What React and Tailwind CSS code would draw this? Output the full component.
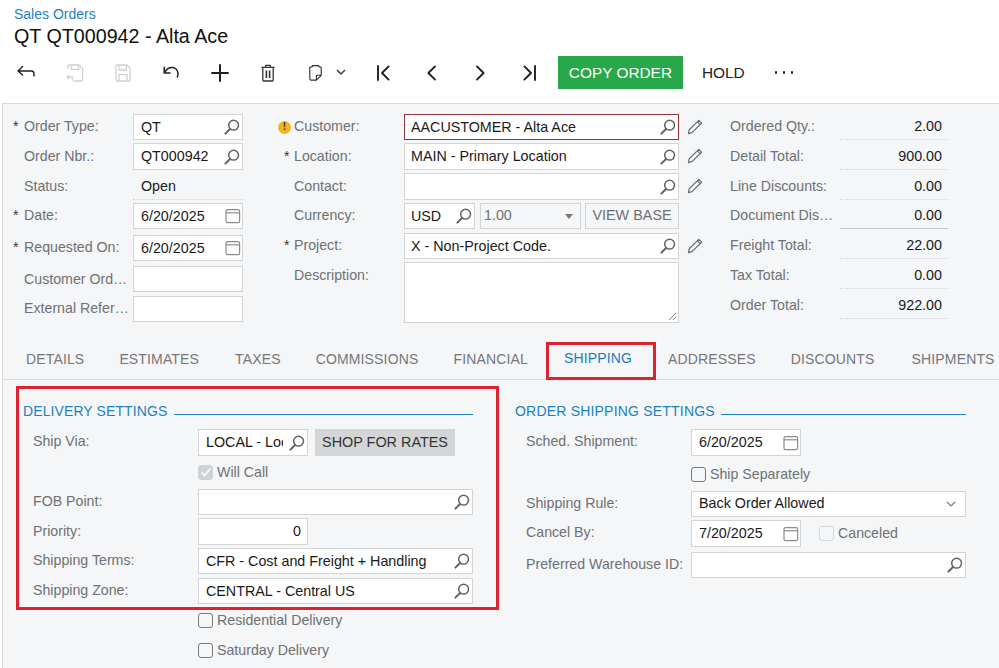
const SearchIcon = () => (
  <svg width="18" height="18" viewBox="0 0 18 18" fill="none" stroke="#5f6368" className="shrink-0">
    <circle cx="10.6" cy="7.2" r="4.9" strokeWidth="1.5" />
    <path d="M7 11 L2.4 15.6" strokeWidth="2" strokeLinecap="round" />
  </svg>
);

const CalendarIcon = () => (
  <svg width="16" height="16" viewBox="0 0 16 16" fill="none" stroke="#8a8d90" strokeWidth="1.2" className="shrink-0">
    <rect x="1" y="1.6" width="13.6" height="13" rx="1.6" />
    <path d="M1 4.8 H14.6" />
  </svg>
);

const PencilIcon = () => (
  <svg width="16" height="16" viewBox="0 0 16 16" fill="none" stroke="#6b6e71" strokeWidth="1.2" strokeLinejoin="round">
    <path d="M1.4 14.6 L2.2 10.8 L11.8 1.4 L14.6 4.2 L5 13.6 Z" />
    <path d="M10.4 2.8 L13.2 5.6" />
  </svg>
);

const Arrow = ({ d, color = "#1f1f1f", sw = 1.6 }) => (
  <svg width="20" height="20" viewBox="0 0 20 20" fill="none" stroke={color} strokeWidth={sw} strokeLinecap="round" strokeLinejoin="round">
    <path d={d} />
  </svg>
);

const toolbarIcons = [
  <Arrow key="back" d="M2 8 L6.6 3.6 M2 8 L6.6 12 M2 8 H15.4 Q18 8 18 10.8 V13" sw={1.4} />,
  <svg key="savecancel" width="20" height="20" viewBox="0 0 20 20" fill="none" stroke="#cfd1d3" strokeWidth="1.3">
    <path d="M3 6 V3 Q3 2 4 2 H14 L17.6 5 V17 Q17.6 18 16.6 18 H9" />
    <path d="M6.4 2 V6.4 H13.6 V2" />
    <path d="M2 14 H7.4 V18 M2 14 L4 12 M2 14 L4 16" />
  </svg>,
  <svg key="save" width="20" height="20" viewBox="0 0 20 20" fill="none" stroke="#cfd1d3" strokeWidth="1.3">
    <path d="M3 3 Q3 2 4 2 H14 L17 5 V17 Q17 18 16 18 H4 Q3 18 3 17 Z" />
    <path d="M6 2 V7 H13.4 V2 M6 18 V11.6 H14 V18" />
  </svg>,
  <Arrow key="undo" d="M3.2 4.2 L3.2 10 L9 10 M3.2 10 C5.6 5.6 9 4 12.2 4.6 C16.4 5.6 18 9.6 16.4 14" sw={1.5} />,
  <Arrow key="plus" d="M10 2 V18 M2 10 H18" sw={2} />,
  <svg key="trash" width="20" height="20" viewBox="0 0 20 20" fill="none" stroke="#333" strokeWidth="1.3" strokeLinejoin="round">
    <path d="M3.4 4.4 H16.6 M7.6 4.4 V2.4 H12.4 V4.4" />
    <path d="M4.8 4.4 V17 Q4.8 18 5.8 18 H14.2 Q15.2 18 15.2 17 V4.4" />
    <path d="M8.4 7.6 V15 M11.6 7.6 V15" strokeWidth="1.6" />
  </svg>,
];

const navIcons = [
  ["first", "M4 3 V17 M14.6 3.4 L8 10 L14.6 16.6"],
  ["prev", "M13 3.4 L6.4 10 L13 16.6"],
  ["next", "M7 3.4 L13.6 10 L7 16.6"],
  ["last", "M5.4 3.4 L12 10 L5.4 16.6 M16 3 V17"],
];

// text field with an optional icon on the right
function Input({ value = "", icon, className = "", textClass = "" }) {
  return (
    <div className={`flex shrink-0 items-center border border-[#d2d4d6] bg-white pl-[7px] pr-[1px] text-[14.3px] text-[#1a1a1a] ${className}`}>
      <span className={`min-w-0 flex-1 overflow-hidden whitespace-nowrap pt-[1px] ${textClass}`}>{value}</span>
      {icon === "search" && <SearchIcon />}
      {icon === "calendar" && <CalendarIcon />}
    </div>
  );
}

function Check({ label, checked, disabled, className = "" }) {
  return (
    <div className={`flex items-center gap-[4px] text-[14.2px] text-[#6f7173] ${className}`}>
      <span className={`flex h-[15px] w-[15px] items-center justify-center rounded-[3px] border ${checked ? "border-[#d0d2d4] bg-[#d0d2d4]" : disabled ? "border-[#d6d8da]" : "border-[#77797b]"}`}>
        {checked && (
          <svg width="12" height="12" viewBox="0 0 12 12" fill="none" stroke="#f4f5f6" strokeWidth="2">
            <path d="M1.6 6.4 L4.6 9.6 L10.4 2.4" />
          </svg>
        )}
      </span>
      <span>{label}</span>
    </div>
  );
}

function Label({ children, className = "" }) {
  return <div className={`truncate text-[14.2px] text-[#6f7173] ${className}`}>{children}</div>;
}

function FieldLabel({ w, children, className = "" }) {
  return (
    <div className={`flex h-[26px] shrink-0 items-center ${w}`}>
      <Label className={className}>{children}</Label>
    </div>
  );
}

const Star = ({ className = "" }) => (
  <span className={`w-[11px] shrink-0 pb-[2px] text-[14px] leading-none text-[#333] ${className}`}>*</span>
);

const WarnIcon = () => (
  <span className="mr-[3px] flex h-[13px] w-[13px] shrink-0 items-center justify-center rounded-full bg-[#f5b417] text-[10px] font-bold leading-none text-[#333]">!</span>
);

const totals = [
  ["Ordered Qty.:", "2.00", "h-[30px]", "border-dotted border-[#d2d4d6]"],
  ["Detail Total:", "900.00", "h-[30px]", "border-dotted border-[#d2d4d6]"],
  ["Line Discounts:", "0.00", "h-[29px]", "border-dotted border-[#d2d4d6]"],
  ["Document Discount:", "0.00", "h-[30px]", "border-solid border-[#c4c6c8]"],
  ["Freight Total:", "22.00", "h-[30px]", "border-dotted border-[#d2d4d6]"],
  ["Tax Total:", "0.00", "h-[30px]", "border-dotted border-[#d2d4d6]"],
  ["Order Total:", "922.00", "h-[30px]", "border-dotted border-[#d2d4d6]"],
];

const tabs = [
  ["DETAILS", ""],
  ["ESTIMATES", "-ml-[1px]"],
  ["TAXES", ""],
  ["COMMISSIONS", "-ml-[1px]"],
  ["FINANCIAL", "-ml-[1px]"],
  ["SHIPPING", ""],
  ["ADDRESSES", ""],
  ["DISCOUNTS", "-ml-[1px]"],
  ["SHIPMENTS", "ml-[1px]"],
];

export default function App() {
  const activeTab = "SHIPPING";

  return (
    <div className="relative h-[668px] w-[999px] overflow-hidden bg-white font-['Liberation_Sans',Arial,sans-serif]">
      {/* Header */}
      <div className="h-[103px] pl-[14px] pt-[6px]">
        <div className="text-[14px] leading-[16px] text-[#1f7fc1]">Sales Orders</div>
        <div className="mt-[2px] text-[19.7px] leading-[24px] text-[#111]">QT QT000942 - Alta Ace</div>
        <div className="-ml-[12px] mt-[8px] flex h-[33px] items-center">
          {toolbarIcons.map((ic, i) => (
            <div key={i} className="flex w-[48.4px] justify-center">{ic}</div>
          ))}
          <div className="flex w-[31px] justify-end">
            <svg width="15" height="18" viewBox="0 0 17 20" fill="none" stroke="#333" strokeWidth="1.3" strokeLinejoin="round">
              <path d="M5 3 H3.4 Q2 3 2 4.4 V16.6 Q2 18 3.4 18 H9.6 L15 12.6 V4.4 Q15 3 13.6 3 H12 M5 3 V1.6 H12 V3 M9.6 18 V12.6 H15" />
            </svg>
          </div>
          <div className="flex w-[23px] justify-end">
            <svg width="10" height="7" viewBox="0 0 10 7" fill="none" stroke="#333" strokeWidth="1.4">
              <path d="M1 1 L5 5 L9 1" />
            </svg>
          </div>
          <div className="w-[13px]" />
          {navIcons.map(([name, d]) => (
            <div key={name} className="flex w-[48.4px] justify-center">
              <Arrow d={d} sw={1.9} />
            </div>
          ))}
          <button className="ml-[5px] flex h-[33px] w-[125px] items-center justify-center bg-[#28a84a] text-[15.4px] text-white">COPY ORDER</button>
          <span className="ml-[19px] text-[15.4px] text-[#222]">HOLD</span>
          <span className="ml-[30px] flex gap-[5.5px]">
            <i className="h-[2.5px] w-[2.5px] rounded-full bg-[#222]" />
            <i className="h-[2.5px] w-[2.5px] rounded-full bg-[#222]" />
            <i className="h-[2.5px] w-[2.5px] rounded-full bg-[#222]" />
          </span>
        </div>
      </div>

      {/* Form area */}
      <div className="ml-[2px] h-[565px] border-l border-t border-[#d6d8da] bg-[#f4f6f8]">
        <div className="flex h-[236px] pt-[10px]">
          {/* Column 1 */}
          <div className="ml-[10px] w-[230px] shrink-0">
            {[
              ["Order Type:", true, "QT", "h-[29px]", "h-[26px]"],
              ["Order Nbr.:", false, "QT000942", "h-[30px]", "h-[27px]"],
            ].map(([l, req, v, rh, ih]) => (
              <div key={l} className={`flex items-start ${rh}`}>
                <div className={`flex w-[120px] shrink-0 items-center ${ih}`}>
                  {req ? <Star /> : <span className="w-[11px]" />}
                  <Label>{l}</Label>
                </div>
                <Input value={v} icon="search" className={`w-[110px] ${ih}`} />
              </div>
            ))}
            <div className="flex h-[30px] items-start">
              <div className="flex h-[27px] w-[120px] shrink-0 items-center">
                <span className="w-[11px]" />
                <Label>Status:</Label>
              </div>
              <div className="flex h-[27px] w-[110px] items-center border-b border-dotted border-[#d2d4d6] pl-[8px] pt-[1px] text-[14.3px] text-[#1a1a1a]">Open</div>
            </div>
            {[
              ["Date:", "6/20/2025", "h-[32px]"],
              ["Requested On:", "6/20/2025", "h-[31px]"],
            ].map(([l, v, rh]) => (
              <div key={l} className={`flex items-start ${rh}`}>
                <div className="flex h-[26px] w-[120px] shrink-0 items-center">
                  <Star />
                  <Label>{l}</Label>
                </div>
                <Input value={v} icon="calendar" className="h-[26px] w-[110px]" />
              </div>
            ))}
            {[
              ["Customer Ord…", "h-[30px]", "pt-[2px]"],
              ["External Refer…", "h-[30px]", ""],
            ].map(([l, rh, lc]) => (
              <div key={l} className={`flex items-start ${rh}`}>
                <div className="flex h-[26px] w-[120px] shrink-0 items-center">
                  <span className="w-[11px]" />
                  <Label className={`w-[108px] ${lc}`}>{l}</Label>
                </div>
                <Input className="h-[26px] w-[110px]" />
              </div>
            ))}
          </div>

          {/* Column 2 */}
          <div className="ml-[35px] w-[452px] shrink-0">
            {[
              ["Customer:", "AACUSTOMER - Alta Ace", "warn", "h-[29px]", "h-[26px]"],
              ["Location:", "MAIN - Primary Location", "star", "h-[30px]", "h-[27px]"],
              ["Contact:", "", "", "h-[30px]", "h-[27px]"],
            ].map(([l, v, mark, rh, ih]) => (
              <div key={l} className={`flex items-start ${rh}`}>
                <div className={`flex w-[126px] shrink-0 items-center ${ih}`}>
                  <span className="flex w-[16px] shrink-0 justify-end">
                    {mark === "warn" && <WarnIcon />}
                    {mark === "star" && <Star className="!w-[10px]" />}
                  </span>
                  <Label>{l}</Label>
                </div>
                <Input value={v} icon="search" className={`w-[275px] !pl-[6px] ${ih} ${mark === "warn" ? "!border-[#94343a]" : ""}`} />
                <div className="ml-[8px] flex h-[26px] items-center"><PencilIcon /></div>
              </div>
            ))}
            <div className="flex h-[30px] items-start">
              <div className="flex h-[26px] w-[126px] shrink-0 items-center">
                <span className="w-[16px]" />
                <Label>Currency:</Label>
              </div>
              <Input value="USD" icon="search" className="h-[26px] w-[71px] !pl-[6px]" />
              <div className="ml-[5px] flex h-[26px] w-[101px] items-center justify-between border border-[#d2d4d6] pl-[3px] pr-[7px] text-[14.3px] text-[#6f7173]">
                <span>1.00</span>
                <span className="h-0 w-0 border-x-[4px] border-t-[5px] border-x-transparent border-t-[#777]" />
              </div>
              <div className="ml-[4px] flex h-[26px] w-[94px] items-center justify-center border border-[#d2d4d6] text-[14.4px] text-[#6f7173]">VIEW BASE</div>
            </div>
            <div className="flex h-[29px] items-start">
              <div className="flex h-[26px] w-[126px] shrink-0 items-center">
                <span className="flex w-[16px] justify-end"><Star className="!w-[10px]" /></span>
                <Label>Project:</Label>
              </div>
              <Input value="X - Non-Project Code." icon="search" className="h-[26px] w-[275px] !pl-[6px]" />
              <div className="ml-[8px] flex h-[26px] items-center"><PencilIcon /></div>
            </div>
            <div className="flex items-start">
              <div className="flex h-[26px] w-[126px] shrink-0 items-center">
                <span className="w-[16px]" />
                <Label className="pt-[2px]">Description:</Label>
              </div>
              <div className="relative h-[61px] w-[275px] border border-[#d2d4d6] bg-white">
                <svg width="9" height="9" viewBox="0 0 9 9" className="absolute bottom-[1px] right-[1px]" stroke="#777" strokeWidth="0.9">
                  <path d="M1 8 L8 1 M5 8 L8 5" />
                </svg>
              </div>
            </div>
          </div>

          {/* Column 3 */}
          <div className="w-[218px] shrink-0">
            {totals.map(([l, v, rh, line]) => (
              <div key={l} className={`flex items-start ${rh}`}>
                <span className="flex h-[26px] w-[110px] shrink-0 items-center pr-[6px] pb-[1px] text-[14.2px] text-[#6f7173]">
                  <span className="truncate">{l}</span>
                </span>
                <span className={`flex h-[26px] w-[108px] items-center justify-end border-b pr-[6px] pt-[1px] text-[14.3px] text-[#1a1a1a] ${line}`}>{v}</span>
              </div>
            ))}
          </div>
        </div>

        {/* Tabs */}
        <div className="flex h-[40px] items-center whitespace-nowrap border-b border-[#d6d8da] pl-[5px] text-[14px] tracking-[0.15px] text-[#75777a]">
          {tabs.map(([t, offset]) => (
            <div key={t} className={`shrink-0 px-[18px] ${offset} ${t === activeTab ? "-mt-[2px] text-[#1b7fb8]" : ""}`}>{t}</div>
          ))}
        </div>

        {/* Shipping tab */}
        <div className="flex pt-[22px]">
          <div className="ml-[20px] w-[450px] shrink-0">
            <div className="flex h-[18px] items-center text-[14px] text-[#1b82c0]">
              <span className="tracking-[0.1px]">DELIVERY SETTINGS</span>
              <span className="ml-[7px] mt-[6px] h-px flex-1 bg-[#1b82c0]" />
            </div>
            <div className="mt-[9px]">
              <div className="flex h-[30px] items-start">
                <FieldLabel w="w-[175px] pl-[10px]">Ship Via:</FieldLabel>
                <Input value="LOCAL - Loc" icon="search" className="h-[27px] w-[110px]" textClass="mr-[5px]" />
                <div className="ml-[7px] flex h-[27px] w-[140px] items-center justify-center bg-[#d4d5d6] text-[14.4px] text-[#333]">SHOP FOR RATES</div>
              </div>
              <div className="flex h-[30px] items-center pb-[3px] pl-[175px]"><Check label="Will Call" checked /></div>
              <div className="flex h-[29px] items-start">
                <FieldLabel w="w-[175px] pl-[10px]">FOB Point:</FieldLabel>
                <Input icon="search" className="h-[26px] w-[275px]" />
              </div>
              <div className="flex h-[30px] items-start">
                <FieldLabel w="w-[175px] pl-[10px]" className="pt-[2px]">Priority:</FieldLabel>
                <Input value="0" className="h-[27px] w-[110px] !pr-[6px]" textClass="text-right" />
              </div>
              <div className="flex h-[30px] items-start">
                <FieldLabel w="w-[175px] pl-[10px]">Shipping Terms:</FieldLabel>
                <Input value="CFR - Cost and Freight + Handling" icon="search" className="h-[26px] w-[275px]" />
              </div>
              <div className="flex h-[30px] items-start">
                <FieldLabel w="w-[175px] pl-[10px]">Shipping Zone:</FieldLabel>
                <Input value="CENTRAL - Central US" icon="search" className="h-[26px] w-[275px]" />
              </div>
              <div className="flex h-[30px] items-center pb-[4px] pl-[175px]"><Check label="Residential Delivery" /></div>
              <div className="flex h-[30px] items-center pb-[4px] pl-[175px]"><Check label="Saturday Delivery" /></div>
            </div>
          </div>

          <div className="ml-[42px] w-[451px] shrink-0">
            <div className="flex h-[18px] items-center text-[14px] text-[#1b82c0]">
              <span className="tracking-[0.2px]">ORDER SHIPPING SETTINGS</span>
              <span className="ml-[6px] mt-[6px] h-px flex-1 bg-[#1b82c0]" />
            </div>
            <div className="mt-[9px]">
              <div className="flex h-[30px] items-start">
                <FieldLabel w="w-[176px] pl-[11px]">Sched. Shipment:</FieldLabel>
                <Input value="6/20/2025" icon="calendar" className="h-[27px] w-[110px]" />
              </div>
              <div className="flex h-[32px] items-center pb-[1px] pl-[176px]"><Check label="Ship Separately" /></div>
              <div className="flex h-[29px] items-start">
                <FieldLabel w="w-[176px] pl-[11px]">Shipping Rule:</FieldLabel>
                <div className="flex h-[26px] w-[275px] items-center justify-between border border-[#d2d4d6] bg-white pl-[7px] pr-[9px] text-[14.3px] text-[#1a1a1a]">
                  <span>Back Order Allowed</span>
                  <svg width="10" height="7" viewBox="0 0 10 7" fill="none" stroke="#77797b" strokeWidth="1.2"><path d="M1 1 L5 5 L9 1" /></svg>
                </div>
              </div>
              <div className="flex h-[32px] items-start">
                <FieldLabel w="w-[176px] pl-[11px]">Cancel By:</FieldLabel>
                <Input value="7/20/2025" icon="calendar" className="h-[27px] w-[110px]" />
                <Check label="Canceled" disabled className="ml-[18px] h-[27px]" />
              </div>
              <div className="flex h-[30px] items-start">
                <FieldLabel w="w-[176px] pl-[11px]">Preferred Warehouse ID:</FieldLabel>
                <Input icon="search" className="h-[26px] w-[275px]" />
              </div>
            </div>
          </div>
        </div>
      </div>

      {/* Red callouts drawn over the screenshot */}
      <div className="pointer-events-none absolute left-[16px] top-[386px] h-[224px] w-[483px] border-[3px] border-[#dc2430]" />
      <div className="pointer-events-none absolute left-[546px] top-[342px] h-[38px] w-[110px] border-[3px] border-[#dc2430]" />
    </div>
  );
}
